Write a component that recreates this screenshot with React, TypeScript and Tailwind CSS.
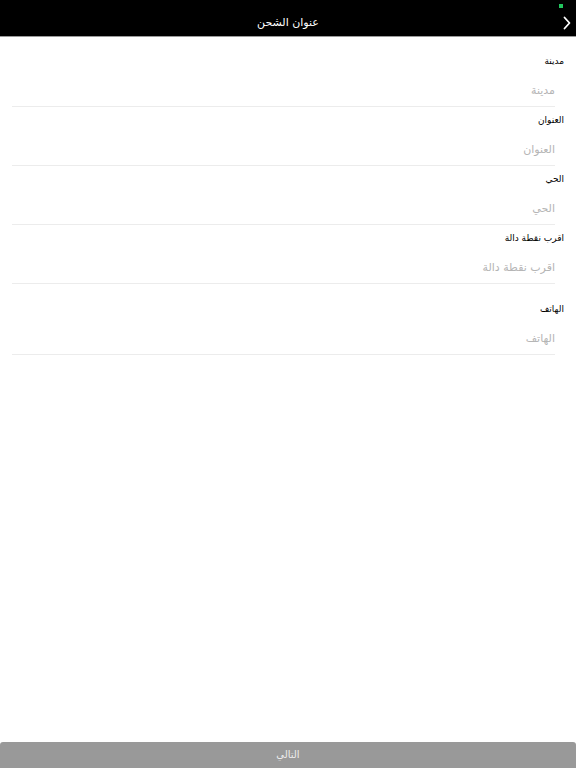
import React from "react";

const fields = [
  { label: "مدينة", gap: false },
  { label: "العنوان", gap: false },
  { label: "الحي", gap: false },
  { label: "اقرب نقطة دالة", gap: false },
  { label: "الهاتف", gap: true },
];

export default function App() {
  return (
    <div
      dir="rtl"
      className="flex h-[768px] w-[576px] flex-col bg-white"
      style={{ fontFamily: '"DejaVu Sans", "Noto Sans", sans-serif' }}
    >
      <div className="relative h-[37px] shrink-0 border-b border-[#9a9a9a] bg-black">
        <div className="absolute right-[13px] top-[4px] h-[4px] w-[4px] bg-[#22c55e]" />
        <div className="flex h-full items-center justify-center pt-[10px]">
          <span className="text-[11px] leading-[14px] text-white">عنوان الشحن</span>
        </div>
        <svg
          className="absolute right-[4px] top-[16px]"
          width="10"
          height="14"
          viewBox="0 0 10 14"
          fill="none"
        >
          <path d="M2.5 1.5 L7.5 7 L2.5 12.5" stroke="white" strokeWidth="1.8" strokeLinecap="round" strokeLinejoin="round" />
        </svg>
      </div>

      <div className="flex flex-col pt-[17px]">
        {fields.map((f, i) => (
          <div key={i} className={f.gap ? "pt-[18px]" : i === 0 ? "" : "pt-[6px]"}>
            <div className="pr-[12px] text-[9px] leading-[14px] text-black">{f.label}</div>
            <div className="ml-[12px] mr-[21px] flex h-[39px] items-end border-b border-[#ececec] pb-[8px]">
              <span className="text-[11px] leading-[14px] text-[#b5b5b5]">{f.label}</span>
            </div>
          </div>
        ))}
      </div>

      <div className="mt-auto flex h-[26px] shrink-0 items-center justify-center rounded-t-[3px] bg-[#999999]">
        <span className="text-[10px] leading-[14px] text-[#ededed]">التالي</span>
      </div>
    </div>
  );
}
